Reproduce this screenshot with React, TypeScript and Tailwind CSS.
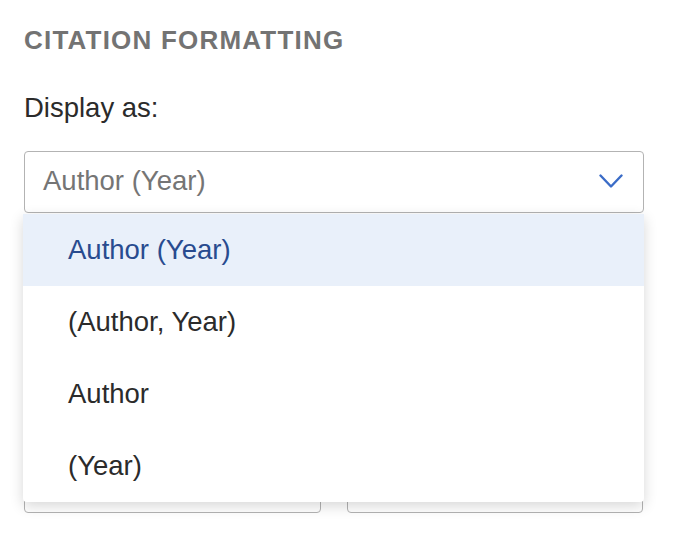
const options = ['Author (Year)', '(Author, Year)', 'Author', '(Year)']

export default function App() {
  const selected = options[0]

  return (
    <div className="min-h-[538px] bg-white font-['Liberation_Sans',Arial,sans-serif]">
      <div className="ml-6 w-[620px] pt-6">
        <h2 className="text-[26px] leading-[32px] font-bold tracking-[1.2px] text-[#737373] uppercase">
          Citation Formatting
        </h2>

        <label className="mt-9 block text-[27.5px] leading-[32px] text-[#2b2b2b]">Display as:</label>

        {/* select + open listbox */}
        <div className="relative mt-[27px]">
          <button
            type="button"
            className="flex h-[62px] w-full items-center justify-between rounded-[4px] border border-[#b3b3b3] bg-white pl-[18px] pr-[20px] text-left"
          >
            <span className="-mt-[2px] text-[27.5px] leading-[32px] text-[#757575]">{selected}</span>
            <svg width="24" height="15" viewBox="0 0 24 15" fill="none" className="-mt-[2px]">
              <polyline
                points="1.5,1.5 12,12.5 22.5,1.5"
                stroke="#3b6cc7"
                strokeWidth="2.4"
                strokeLinecap="round"
                strokeLinejoin="round"
              />
            </svg>
          </button>

          <ul className="absolute top-[63px] -left-px z-10 w-[621px] overflow-hidden rounded-b-[4px] bg-white shadow-[0_4px_14px_rgba(0,0,0,0.16)]">
            {options.map((opt) => (
              <li
                key={opt}
                className={
                  opt === selected
                    ? 'flex h-[72px] items-center bg-[#e9f0fa] pl-[45px] text-[27.5px] leading-[32px] text-[#284b8f]'
                    : 'flex h-[72px] items-center pl-[45px] text-[27.5px] leading-[32px] text-[#2b2b2b]'
                }
              >
                {opt}
              </li>
            ))}
          </ul>
        </div>

        {/* fields underneath the open menu */}
        <div className="mt-[238px] grid grid-cols-2 gap-[26px] pr-px">
          <div className="h-[62px] rounded-[4px] border border-[#b3b3b3] bg-white" />
          <div className="h-[62px] rounded-[4px] border border-[#b3b3b3] bg-white" />
        </div>
      </div>
    </div>
  )
}
